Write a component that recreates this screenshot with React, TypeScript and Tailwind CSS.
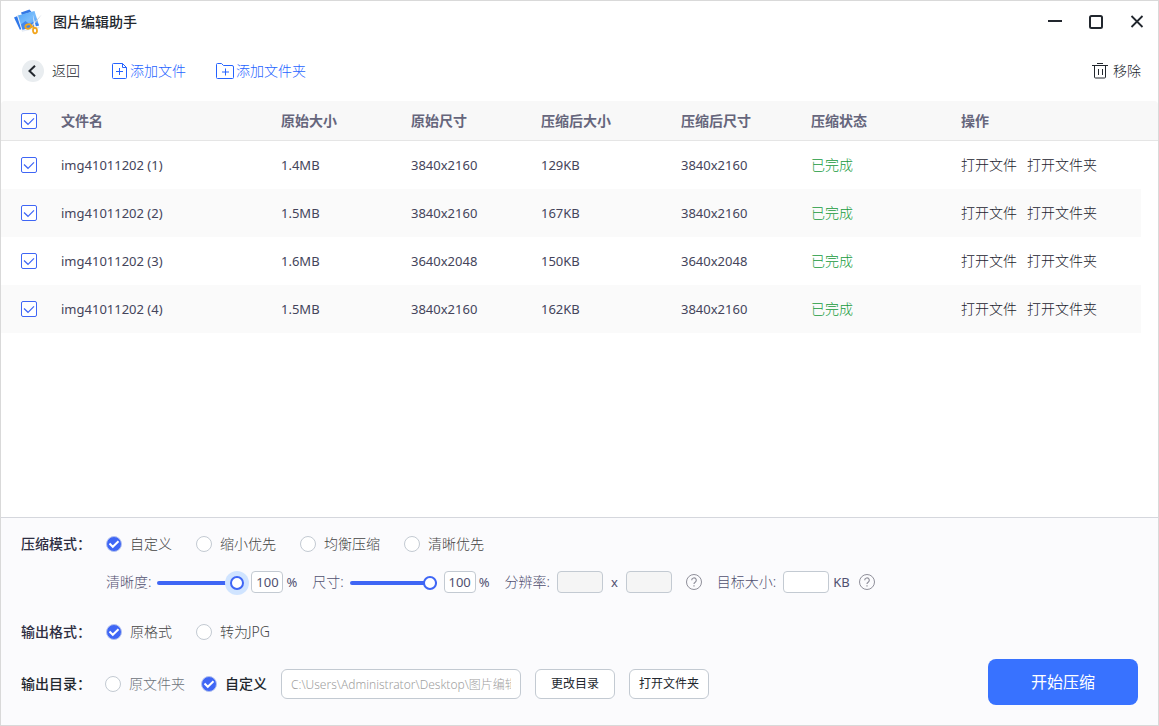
import React, { useState } from 'react';

const files = [
    { name: 'img41011202 (1)', size: '1.4MB', dims: '3840x2160', newSize: '129KB', newDims: '3840x2160' },
    { name: 'img41011202 (2)', size: '1.5MB', dims: '3840x2160', newSize: '167KB', newDims: '3840x2160' },
    { name: 'img41011202 (3)', size: '1.6MB', dims: '3640x2048', newSize: '150KB', newDims: '3640x2048' },
    { name: 'img41011202 (4)', size: '1.5MB', dims: '3840x2160', newSize: '162KB', newDims: '3840x2160' },
];

function Logo() {
    return (
        <svg width="28" height="28" viewBox="0 0 28 28" aria-hidden="true">
            <defs>
                <linearGradient id="photo" x1="0" y1="0" x2="1" y2="1">
                    <stop offset="0" stopColor="#4fa4f8"/>
                    <stop offset=".5" stopColor="#79bcfb"/>
                    <stop offset="1" stopColor="#3a8af5"/>
                </linearGradient>
            </defs>
            <path d="M7 4.500 15.500 1.500l2 2.500L8 7z" fill="#3478e4"/>
            <path d="m0 9.500 3.500-1.500 4 12.500L6 22z" fill="#2f78ea"/>
            <path d="m2.800 7.200 2-.7 4.400 15.800 16-3.800.3 1.500L8 23.800z" fill="#e4ebf5"/>
            <path d="M4 7.500 20.500 3l4.500 14.500-16.500 4.300z" fill="url(#photo)"/>
            <path d="m7 16.500 4.500-3.500 4 3 3.500-2 5 1.500.8 2-16.300 4.300z" fill="#2d74e8" opacity=".7"/>
            <path d="M27.800 6.500 18.500 18.500l-1.500-1z" fill="#c3cad5"/>
            <path d="m18.800 6.500 3.400 13-1.800.5z" fill="#f4f6f9"/>
            <ellipse cx="14.300" cy="18.500" rx="3" ry="2.100" transform="rotate(-15 14.300 18.500)" fill="none" stroke="#f2a51d" strokeWidth="1.800"/>
            <path d="M17 17.700 20.500 20" stroke="#f2a51d" strokeWidth="1.600"/>
            <ellipse cx="21" cy="22.600" rx="2" ry="2.700" transform="rotate(-5 21 22.600)" fill="none" stroke="#f2a51d" strokeWidth="1.800"/>
        </svg>
    );
}

function AddFileIcon() {
    return (
        <svg width="16" height="17" viewBox="0 0 16 17" fill="none" stroke="currentColor" aria-hidden="true">
            <path d="M10.500.5h-9a1 1 0 0 0-1 1v13a1 1 0 0 0 1 1h12a1 1 0 0 0 1-1v-10l-4-4v4h4M7.500 5v7M4 8.500h7"/>
        </svg>
    );
}

function AddFolderIcon() {
    return (
        <svg width="18" height="17" viewBox="0 0 18 17" fill="none" stroke="currentColor" aria-hidden="true">
            <path d="M.5 14.500v-13a1 1 0 0 1 1-1h4l2 2h8.500a1.500 1.500 0 0 1 1.500 1.500v10.500a1 1 0 0 1-1 1h-15a1 1 0 0 1-1-1zM9.500 5.500v7M6 9h7"/>
        </svg>
    );
}

function TrashIcon() {
    return (
        <svg width="16" height="16" viewBox="0 0 16 16" fill="none" stroke="currentColor" aria-hidden="true">
            <path d="M0 2.500h16M5 .5h6M2.500 2.500v11.500a1 1 0 0 0 1 1h9a1 1 0 0 0 1-1V2.500M6.500 6v6M10.500 6v6"/>
        </svg>
    );
}

function Checkbox({ label }: { label: string }) {
    return (
        <span className="relative block size-4">
            <input type="checkbox" defaultChecked aria-label={label}
                   className="peer block size-4 appearance-none rounded-[2px] border border-[#3f66f5] bg-white"/>
            <svg viewBox="0 0 16 16" fill="none" stroke="#3f66f5" strokeWidth="1.200"
                 className="pointer-events-none absolute inset-0 hidden peer-checked:block">
                <path d="m3 7.500 4 3.800 6-6"/>
            </svg>
        </span>
    );
}

type RadioProps = { name: string; label: string; checked?: boolean; className?: string };

function Radio({ name, label, checked, className = 'text-[#444]' }: RadioProps) {
    return (
        <label className={`flex items-center gap-2 whitespace-nowrap ${className}`}>
            <span className="relative block size-4">
                <input type="radio" name={name} defaultChecked={checked}
                       className="peer block size-4 appearance-none rounded-full border border-[#c3cad2] bg-white checked:border-[#b3c2f0] checked:bg-[#3f66f5]"/>
                <svg viewBox="0 0 16 16" fill="none" stroke="#fff" strokeWidth="2"
                     className="pointer-events-none absolute inset-0 hidden peer-checked:block">
                    <path d="m3.500 7.500 3.300 3.300 5.700-5.500"/>
                </svg>
            </span>
            {label}
        </label>
    );
}

function PercentSlider({ id, label, halo = '' }: { id: string; label: string; halo?: string }) {
    const [value, setValue] = useState(100);

    return (
        <div className="flex items-center">
            <label htmlFor={id} className="mr-[6px]">{label}</label>
            <input id={id} type="range" value={value} onChange={e => setValue(Number(e.target.value))}
                   className={`mt-0.5 h-4 w-[87px] appearance-none bg-transparent [&::-webkit-slider-runnable-track]:h-1 [&::-webkit-slider-runnable-track]:rounded-full [&::-webkit-slider-runnable-track]:bg-[#3f66f5] [&::-webkit-slider-thumb]:-mt-[5px] [&::-webkit-slider-thumb]:size-[14px] [&::-webkit-slider-thumb]:appearance-none [&::-webkit-slider-thumb]:rounded-full [&::-webkit-slider-thumb]:border-2 [&::-webkit-slider-thumb]:border-[#3f66f5] [&::-webkit-slider-thumb]:bg-white ${halo}`}/>
            <input type="text" value={value} aria-label={`${label} %`} onChange={e => setValue(Number(e.target.value) || 0)}
                   className="ml-[7px] h-[22px] w-8 rounded border border-[#c3cad2] bg-white text-center text-[13px] font-normal"/>
            <span className="ml-[3px] text-[13px] font-normal">%</span>
        </div>
    );
}

function Help({ label }: { label: string }) {
    return (
        <button type="button" aria-label={label} className="text-[#8f8f9a]">
            <svg width="16" height="16" viewBox="0 0 16 16" fill="none" stroke="currentColor">
                <circle cx="8" cy="8" r="7.500"/>
                <path d="M5.700 6.300a2.300 2.300 0 1 1 3.500 1.900c-.8.500-1.200.9-1.200 1.800M8 11.200v1.200" strokeWidth="1.200"/>
            </svg>
        </button>
    );
}

function TitleBar() {
    return (
        <header className="flex h-[42px] items-center pr-px pl-[13px] text-[#22272e]">
            <Logo/>
            <h1 className="ml-[11px] text-sm font-medium">图片编辑助手</h1>
            <div className="ml-auto flex gap-px">
                <button type="button" aria-label="最小化" className="flex h-8 w-10 items-center justify-center">
                    <svg width="14" height="14" viewBox="0 0 14 14"><path d="M0 5h14v2H0z" fill="currentColor"/></svg>
                </button>
                <button type="button" aria-label="最大化" className="flex h-8 w-10 items-center justify-center">
                    <svg width="14" height="14" viewBox="0 0 14 14" fill="none" stroke="currentColor" strokeWidth="2">
                        <rect x="1" y="0" width="12" height="12" rx="1.500" className="translate-y-px"/>
                    </svg>
                </button>
                <button type="button" aria-label="关闭" className="flex h-8 w-10 items-center justify-center">
                    <svg width="14" height="14" viewBox="0 0 14 14" fill="none" stroke="currentColor" strokeWidth="1.800">
                        <path d="m1.500 1 11 11M12.500 1l-11 11"/>
                    </svg>
                </button>
            </div>
        </header>
    );
}

function Toolbar() {
    return (
        <nav className="flex h-[58px] items-center pr-[17px] pb-0.5 pl-[21px] text-sm text-[#22272e]">
            <button type="button" className="flex items-center gap-2">
                <span className="flex size-[22px] items-center justify-center rounded-full bg-[#e9edf0]">
                    <svg width="12" height="12" viewBox="0 0 12 12" fill="none" stroke="#22272e" strokeWidth="2">
                        <path d="M8 .8 2.500 6 8 11.200"/>
                    </svg>
                </span>
                返回
            </button>
            <button type="button" className="ml-8 flex items-center gap-0.5 text-[#2563ff]">
                <AddFileIcon/>添加文件
            </button>
            <button type="button" className="ml-[30px] flex items-center gap-0.5 text-[#2563ff]">
                <AddFolderIcon/>添加文件夹
            </button>
            <button type="button" className="ml-auto flex items-center gap-[5px]">
                <TrashIcon/>移除
            </button>
        </nav>
    );
}

function FileTable() {
    return (
        <table className="w-full table-fixed border-separate border-spacing-0 text-left text-sm text-[#22222e]">
            <colgroup>
                <col className="w-[60px]"/>
                <col className="w-[220px]"/>
                <col className="w-[130px]"/>
                <col className="w-[130px]"/>
                <col className="w-[140px]"/>
                <col className="w-[130px]"/>
                <col className="w-[150px]"/>
                <col/>
                <col className="w-[17px]"/>
            </colgroup>
            <thead className="text-[#66667c] [&_th]:h-10 [&_th]:border-b [&_th]:border-[#e5e5e5] [&_th]:bg-[#f8f8f8] [&_th]:p-0 [&_th]:font-bold">
                <tr>
                    <th className="rounded-tl"><div className="pl-5"><Checkbox label="全选"/></div></th>
                    <th>文件名</th>
                    <th>原始大小</th>
                    <th>原始尺寸</th>
                    <th>压缩后大小</th>
                    <th>压缩后尺寸</th>
                    <th>压缩状态</th>
                    <th colSpan={2} className="rounded-tr">操作</th>
                </tr>
            </thead>
            <tbody className="[&_td]:h-12 [&_td]:p-0 [&>tr:nth-child(even)>td]:bg-[#fafafa]">
                {files.map(file => (
                    <tr key={file.name} className="text-[13px] font-normal text-[#44445a]">
                        <td><div className="pl-5"><Checkbox label={file.name}/></div></td>
                        <td>{file.name}</td>
                        <td>{file.size}</td>
                        <td>{file.dims}</td>
                        <td>{file.newSize}</td>
                        <td>{file.newDims}</td>
                        <td className="text-sm font-light text-[#159a3c]">已完成</td>
                        <td className="text-sm font-light text-[#22222e]">
                            <div className="flex gap-[10px]">
                                <button type="button">打开文件</button>
                                <button type="button">打开文件夹</button>
                            </div>
                        </td>
                    </tr>
                ))}
            </tbody>
        </table>
    );
}

function Settings() {
    return (
        <footer className="flex border-t border-[#d5d7dd] bg-[#fbfbfd] pr-5 pl-5 text-sm text-[#505070]">
            <div className="min-w-0 flex-1 pt-[14px] whitespace-nowrap">
                <div role="radiogroup" aria-labelledby="mode" className="flex h-6 items-center">
                    <h2 id="mode" className="w-[85px] font-medium text-[#2e2e42]">压缩模式：</h2>
                    <div className="grid grid-cols-[90px_104px_104px_104px]">
                        <Radio name="mode" label="自定义" checked/>
                        <Radio name="mode" label="缩小优先"/>
                        <Radio name="mode" label="均衡压缩"/>
                        <Radio name="mode" label="清晰优先"/>
                    </div>
                </div>

                <div className="mt-[15px] flex h-[22px] items-center pl-[85px]">
                    <PercentSlider id="quality" label="清晰度:"
                                   halo="[&::-webkit-slider-thumb]:shadow-[0_0_0_5px_#d0e4ff]"/>
                    <div className="ml-[15px]"><PercentSlider id="scale" label="尺寸:"/></div>
                    <label htmlFor="width" className="ml-[15px]">分辨率:</label>
                    <input id="width" type="text" disabled
                           className="ml-[7px] h-[22px] w-[46px] rounded border border-[#c3cad2] bg-[#f5f5f5]"/>
                    <span className="mx-2 text-[13px] font-normal">x</span>
                    <input type="text" disabled aria-label="高度"
                           className="mr-[14px] h-[22px] w-[46px] rounded border border-[#c3cad2] bg-[#f5f5f5]"/>
                    <Help label="分辨率说明"/>
                    <label htmlFor="target" className="ml-[15px]">目标大小:</label>
                    <input id="target" type="text"
                           className="mr-1 ml-[7px] h-[22px] w-[46px] rounded border border-[#c3cad2] bg-white"/>
                    <span className="mr-[9px] text-[13px] font-normal">KB</span>
                    <Help label="目标大小说明"/>
                </div>

                <div role="radiogroup" aria-labelledby="format" className="mt-[27px] flex h-6 items-center">
                    <h2 id="format" className="w-[85px] font-medium text-[#2e2e42]">输出格式：</h2>
                    <div className="grid grid-cols-[90px_104px]">
                        <Radio name="format" label="原格式" checked/>
                        <Radio name="format" label="转为JPG"/>
                    </div>
                </div>

                <div className="mt-[25px] flex h-[30px] items-center">
                    <h2 id="output" className="w-[84px] font-medium text-[#22272e]">输出目录：</h2>
                    <div role="radiogroup" aria-labelledby="output" className="flex gap-4">
                        <Radio name="output" label="原文件夹" className="text-[#6c727a]"/>
                        <Radio name="output" label="自定义" checked className="font-medium text-[#22272e]"/>
                    </div>
                    <input type="text" readOnly aria-label="输出目录"
                           defaultValue="C:\Users\Administrator\Desktop\图片编辑助手"
                           className="ml-[14px] h-[30px] w-60 rounded-md border border-[#c3cad2] bg-white px-[9px] text-xs text-[#a0a0a0]"/>
                    <button type="button"
                            className="ml-[14px] h-[30px] w-20 rounded-md border border-[#c3cad2] bg-white text-xs font-normal text-[#22272e]">
                        更改目录
                    </button>
                    <button type="button"
                            className="ml-[14px] h-[30px] w-20 rounded-md border border-[#c3cad2] bg-white text-xs font-normal text-[#22272e]">
                        打开文件夹
                    </button>
                </div>
            </div>
            <div className="flex items-end pt-[141px] pb-5">
                <button type="button" className="h-[46px] w-[150px] rounded-lg bg-[#3872ff] text-base font-normal text-white">
                    开始压缩
                </button>
            </div>
        </footer>
    );
}

function App() {
    return (
        <div className="flex min-h-screen flex-col border border-[#d9d9d9] bg-white font-['Noto_Sans','Noto_Sans_CJK_SC',sans-serif] font-light">
            <TitleBar/>
            <Toolbar/>
            <main className="flex-1">
                <FileTable/>
            </main>
            <Settings/>
        </div>
    );
}

export default App;
